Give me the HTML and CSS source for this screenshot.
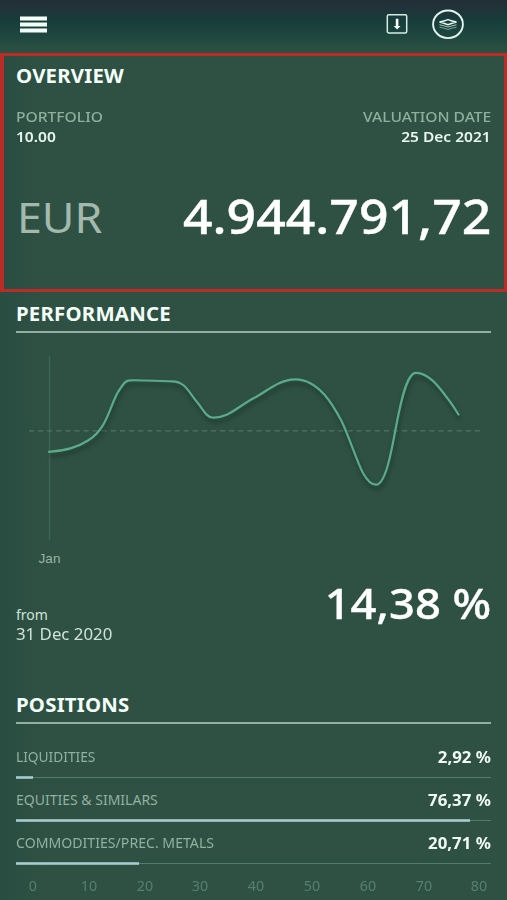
FILE: index.html
```html
<!DOCTYPE html>
<html lang="en">
<head>
<meta charset="utf-8">
<title>Portfolio overview</title>
<link rel="stylesheet" href="styles.css">
</head>
<body>
<header class="topbar">
  <svg class="menu" viewBox="0 0 28 18"><path d="M0 2.500H27M0 8.500H27M0 14.500H27" stroke="#f5fffa" stroke-width="3.8"/></svg>
  <svg class="download" viewBox="0 0 24 24"><rect x="2.3" y="2.7" width="19.4" height="18.2" rx="1.5" fill="none" stroke="#d5ebe3" stroke-width="1.5"/><path d="M10.8 6.700h2.600v7.200h2.100l-3.400 3.500-3.400-3.500h2.100z" fill="#fff"/></svg>
  <svg class="layers" viewBox="0 0 34 34"><ellipse cx="17" cy="17.3" rx="14.9" ry="13.8" fill="none" stroke="#e5f5ef" stroke-width="1.9"/><path d="M8.500 15Q13 14.200 17 12.600Q21 14.200 25.500 15Q21 16.300 17 17.700Q13 16.300 8.500 15Z" fill="none" stroke="#e5f5ef" stroke-width="1.500"/><path d="M8.500 17.800Q13 18.600 17 20.100Q21 18.600 25.500 17.800" fill="none" stroke="#a8c9bd" stroke-width="1"/><path d="M8.500 20.200Q13 20.900 17 22.500Q21 20.900 25.500 20.200" fill="none" stroke="#7fa898" stroke-width="1"/></svg>
</header>
<section class="overview">
  <h2 class="heading"><span>OVERVIEW</span></h2>
  <div class="row labels"><span>PORTFOLIO</span><span class="right">VALUATION DATE</span></div>
  <div class="row values"><span>10.00</span><span class="right">25 Dec 2021</span></div>
  <div class="row total"><span class="currency">EUR</span><span class="right amount">4.944.791,72</span></div>
</section>
<section class="performance">
  <h2 class="heading ruled"><span>PERFORMANCE</span></h2>
  <svg class="chart" viewBox="0 333 507 240">
    <path d="M49.500 356V540" stroke="#3d6453" stroke-width="1.6"/>
    <path d="M29 430.800H480" stroke="#507464" stroke-width="1.3" stroke-dasharray="5 4.1"/>
    <path class="curve" d="M49 451.800C65 451 78 447 88 440.500C109 428 110 402 120 389C124 383 126 380.300 130 380.300C145 380 156 381 172 381.300C185 381.500 188 391 197 402C203 409 206 417.300 212 417.500C228 418.500 237 407 254 398C266 392 279 379.300 295 379.300C320 379 335 409 342 422C350 439 357 462 363 473C369 484 374 484.700 376 484.700C386 484.700 392 448 396 427C401 400 407 372.800 416 372.800C430 372.800 441 390 448 399C452 404 455 409 458.500 414.500"/>
    <text x="38.500" y="563" class="month" textLength="22">Jan</text>
  </svg>
  <div class="row result">
    <div class="since"><div class="from">from</div><div class="day"><span>31 Dec 2020</span></div></div>
    <span class="right percent">14,38 %</span>
  </div>
</section>
<section class="positions">
  <h2 class="heading ruled"><span>POSITIONS</span></h2>
  <div class="row item first"><span class="narrow">LIQUIDITIES</span><b class="right">2,92 %</b></div>
  <div class="bar"><i style="width:17px"></i></div>
  <div class="row item"><span>EQUITIES &amp; SIMILARS</span><b class="right">76,37 %</b></div>
  <div class="bar"><i style="width:453.500px"></i></div>
  <div class="row item"><span class="wide">COMMODITIES/PREC. METALS</span><b class="right">20,71 %</b></div>
  <div class="bar"><i style="width:122.500px"></i></div>
  <div class="scale"><span>0</span><span>10</span><span>20</span><span>30</span><span>40</span><span>50</span><span>60</span><span>70</span><span>80</span></div>
</section>
</body>
</html>
```
FILE: styles.css
```css
* { box-sizing: border-box; }
body {
  margin: 0;
  width: 507px;
  height: 900px;
  overflow: hidden;
  background: linear-gradient(90deg, #2a4d42 0, #2e5143 45px, #2e5143 100%);
  color: #f4fffa;
  font-family: "Noto Sans", "Open Sans", sans-serif;
}
.topbar {
  height: 53px;
  display: flex;
  align-items: flex-start;
  background: linear-gradient(#232d35 0, #20343a 10px, #173c3a 20px, #1b453e 32px, #264b40 44px, #2b5043 53px);
}
.menu { width: 28px; height: 18px; margin: 15.500px 0 0 20px; }
.download { width: 24px; height: 24px; margin: 12.200px 0 0 336.500px; }
.layers { width: 34px; height: 34px; margin: 7px 0 0 22.500px; }
.overview {
  height: 239px;
  border: 3px solid #bb2c27;
  border-left-width: 4px;
  padding: 0 13px 0 12px;
}
.row { display: flex; justify-content: space-between; }
.row span, .heading span { display: inline-block; white-space: nowrap; transform-origin: 0 50%; }
.row .right { transform-origin: 100% 50%; }
.heading { margin: 0; font-size: 18.800px; font-weight: 700; line-height: 30px; letter-spacing: .2px; }
.heading span { transform: translateY(.6px) scaleX(1.085); }
.overview .heading { padding-top: 4px; }
.labels { margin-top: 16px; font-size: 15px; line-height: 20px; color: #8fae9f; font-weight: 500; }
.labels span { transform: scaleX(1.04); }
.values { font-size: 14.500px; line-height: 20px; font-weight: 600; color: #e8f6f0; }
.values span { transform: scaleX(1.07); }
.total { margin-top: 40px; height: 62px; line-height: 60px; }
.currency { font-size: 41px; color: #a3b9ae; transform: translate(-1px, 1px) scaleX(1.09); margin-left: 2px; }
.amount { font-size: 48px; font-weight: 500; color: #fff; transform: translateY(-.5px) scaleX(1.077); -webkit-text-stroke: .4px #fff; }
.performance { height: 391px; }
.ruled { margin: 0 16px; height: 41px; padding-top: 6px; border-bottom: 2px solid #93afa2; }
.chart { display: block; width: 507px; height: 240px; }
.curve { fill: none; stroke: #5aab8c; stroke-width: 2.2; stroke-linecap: round; filter: drop-shadow(1px 4px 2px rgba(20, 35, 30, .6)); }
.month { font: 13.500px "Liberation Sans", sans-serif; fill: #9bb3a7; }
.result { margin: 0 16px; }
.since { padding-top: 32px; color: #cfe2d8; }
.from { font-size: 14px; line-height: 20px; }
.day { font-size: 15.500px; line-height: 19px; }
.day span { transform: scaleX(1.085); }
.percent { font-size: 42px; font-weight: 500; line-height: 60px; color: #fff; transform: scaleX(1.08); -webkit-text-stroke: .4px #fff; }
.positions .ruled { height: 41px; }
.item { margin: 0 16px; height: 40px; padding-top: 9px; line-height: 24px; font-size: 14px; color: #91b0a2; }
.item.first { height: 52px; padding-top: 21px; }
.item .narrow { transform: scaleX(.98); }
.item .wide { transform: scaleX(1.008); }
.item b { font-size: 15.500px; line-height: 24px; color: #effaf4; transform: scaleX(1.085); }
.bar { margin: 0 16px; height: 3px; background: linear-gradient(transparent 1px, #557b6a 1px, #557b6a 2px, transparent 2px); }
.bar i { display: block; height: 3px; background: linear-gradient(#8fb3b2 1px, #a9cbd2 1px, #a9cbd2 2px, #8fb3b2 2px); }
.scale { display: grid; grid-template-columns: repeat(9, 55.800px); margin: 10px 0 0 5px; font-size: 13.500px; line-height: 22px; text-align: center; color: #597f6e; }
.scale span { transform: scaleX(1.06); }
```
